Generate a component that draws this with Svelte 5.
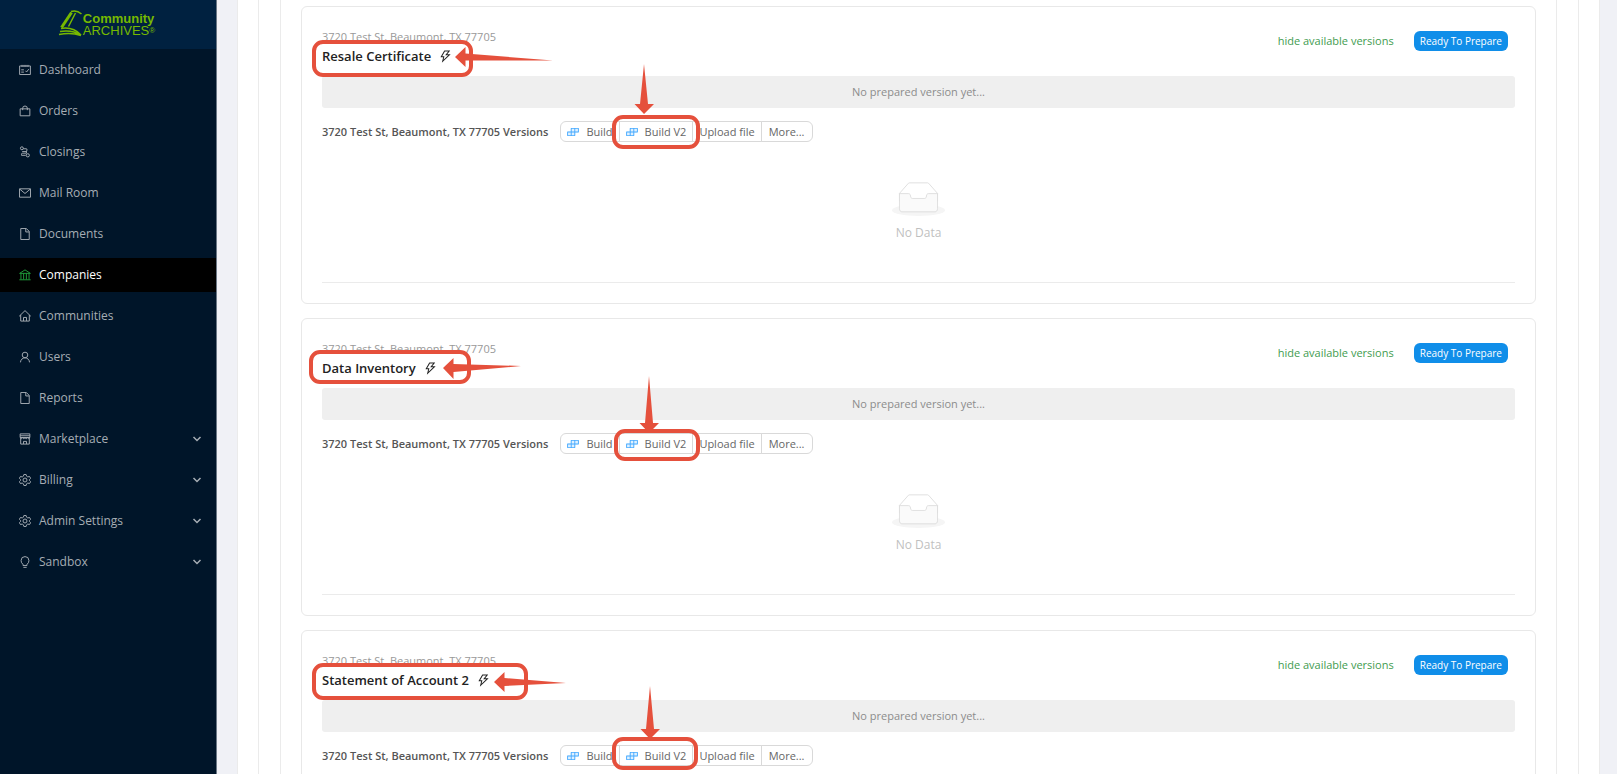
<script lang="ts">
	interface NavItem {
		label: string;
		icon: string;
		active?: boolean;
		children?: boolean;
	}

	interface Box {
		x: number;
		y: number;
		width: number;
		height: number;
	}

	interface Certificate {
		title: string;
		boxes: Box[];
		arrows: string[];
	}

	const address = '3720 Test St, Beaumont, TX 77705';

	const icons: Record<string, string> = {
		schedule:
			'M110 210H914V850H110ZM290 130V290M440 130V290M584 130V290M734 130V290M230 500H430M230 670H430M550 570L630 660L790 450',
		bag: 'M150 350H874V870H150ZM340 450V300A172 160 0 0 1 684 300V450',
		nodes:
			'M390 235A110 110 0 1 1 170 235A110 110 0 1 1 390 235M380 270H600Q680 270 660 360L620 500M300 480H620V600H330Q250 600 250 680V760H560M840 760A120 120 0 1 1 600 760A120 120 0 1 1 840 760',
		mail: 'M100 200H924V824H100ZM130 230L512 550L894 230',
		file: 'M196 100H610L828 320V924H196ZM570 110V358H820',
		bank: 'M110 390H914L512 130ZM210 400V840M410 400V840M614 400V840M814 400V840M90 870H934',
		home: 'M80 530L512 110L944 530M190 440V890H834V440M400 880V620H624V880',
		user: 'M722 362A210 210 0 1 1 302 362A210 210 0 1 1 722 362M174 910C180 720 330 572 512 572S844 720 850 910',
		shop: 'M150 130H874V400H150ZM150 270H874M190 410V890H834V410M150 400Q240 560 330 420Q420 560 512 420Q604 560 694 420Q784 560 874 400M400 880V690H624V880',
		setting:
			'M430 100H594L630 230L720 282L852 248L934 390L838 484V540L934 634L852 776L720 742L630 794L594 924H430L394 794L304 742L172 776L90 634L186 540V484L90 390L172 248L304 282L394 230ZM660 512A148 148 0 1 1 364 512A148 148 0 1 1 660 512',
		bulb: 'M360 770V680Q220 590 220 400A292 292 0 0 1 804 400Q804 590 664 680V770ZM390 910H634'
	};

	const nav: NavItem[] = [
		{ label: 'Dashboard', icon: 'schedule' },
		{ label: 'Orders', icon: 'bag' },
		{ label: 'Closings', icon: 'nodes' },
		{ label: 'Mail Room', icon: 'mail' },
		{ label: 'Documents', icon: 'file' },
		{ label: 'Companies', icon: 'bank', active: true },
		{ label: 'Communities', icon: 'home' },
		{ label: 'Users', icon: 'user' },
		{ label: 'Reports', icon: 'file' },
		{ label: 'Marketplace', icon: 'shop', children: true },
		{ label: 'Billing', icon: 'setting', children: true },
		{ label: 'Admin Settings', icon: 'setting', children: true },
		{ label: 'Sandbox', icon: 'bulb', children: true }
	];

	// callouts are drawn in card coordinates
	const certificates: Certificate[] = [
		{
			title: 'Resale Certificate',
			boxes: [
				{ x: 13, y: 36, width: 157, height: 33 },
				{ x: 313, y: 111, width: 84, height: 30 }
			],
			arrows: [
				'M154 51L164.500 41V47.500L252 54.500L164.500 54.500V61Z',
				'M343 108L333.500 98H339L343 58L347 98H353Z'
			]
		},
		{
			title: 'Data Inventory',
			boxes: [
				{ x: 10, y: 34, width: 158, height: 30 },
				{ x: 315, y: 113, width: 82, height: 28 }
			],
			arrows: [
				'M142 50L152.500 40V46L220 48L152.500 54V61Z',
				'M348 115L338.500 105H344L348 58L352 105H358Z'
			]
		},
		{
			title: 'Statement of Account 2',
			boxes: [
				{ x: 13, y: 35, width: 212, height: 33 },
				{ x: 313, y: 109, width: 82, height: 29 }
			],
			arrows: [
				'M193 52L203.500 42V48L265 53L203.500 56V62Z',
				'M349 109L339.500 99H345L349 56L353 99H359Z'
			]
		}
	];
</script>

{#snippet buildIcon()}
	<svg class="build-icon" viewBox="64 64 896 896" aria-hidden="true">
		<path class="tint" d="M376 210H948V546H680V814H76V478H344V210Z" />
		<path
			d="M916 210H376c-17.700 0-32 14.300-32 32v236H108c-17.700 0-32 14.300-32 32v272c0 17.700 14.300 32 32 32h540c17.700 0 32-14.300 32-32V546h236c17.700 0 32-14.300 32-32V242c0-17.700-14.300-32-32-32zm-504 68h200v200H412V278zm-68 468H144V546h200v200zm268 0H412V546h200v200zm268-268H680V278h200v200z"
		/>
	</svg>
{/snippet}

{#snippet navContent(item: NavItem)}
	<svg class="nav-icon" viewBox="64 64 896 896" aria-hidden="true">
		<path d={icons[item.icon]} />
	</svg>
	<span>{item.label}</span>
{/snippet}

<div class="layout">
	<aside class="sidebar">
		<a class="logo" href="#home">
			<svg class="logo-mark" viewBox="0 0 24 26" aria-hidden="true">
				<path class="spine" d="M2.500 17.500L12.500 2.500" />
				<path d="M12 1.500Q17.500 -0.500 22.500 4M16.500 3L9.500 16.500" />
				<path d="M2 18.500Q14 16.500 22 25M1 21.500Q13 19.500 22 25.300M0 24.500Q12 22 22 25.500" />
			</svg>
			<span class="logo-text">
				<strong>Community</strong>
				<span>ARCHIVES<sup>®</sup></span>
			</span>
		</a>
		<nav>
			{#each nav as item}
				{#if item.children}
					<button type="button" class="nav-item" aria-expanded="false">
						{@render navContent(item)}
						<svg class="chevron" viewBox="0 0 10 10" aria-hidden="true">
							<path d="M1.500 3L5 6.500L8.500 3" />
						</svg>
					</button>
				{:else}
					<a
						class="nav-item {item.active ? 'active' : ''}"
						href="#{item.icon}"
						aria-current={item.active ? 'page' : undefined}
					>
						{@render navContent(item)}
					</a>
				{/if}
			{/each}
		</nav>
	</aside>

	<main>
		<div class="panel">
			<div class="group">
				<div class="list">
					{#each certificates as certificate}
						<article class="card">
							<header>
								<div class="heading">
									<p class="address">{address}</p>
									<h3>
										{certificate.title}
										<svg class="bolt" viewBox="64 64 896 896" aria-hidden="true">
											<path
												d="M848 359.300H627.700L825.800 109c4.100-5.300.4-13-6.300-13H436c-2.800 0-5.500 1.500-6.900 4L170 547.500c-3.100 5.300.7 12 6.900 12h174.400l-89.400 357.600c-1.900 7.800 7.500 13.300 13.300 7.700L853.500 373c5.200-4.900 1.700-13.700-5.500-13.700zM378.200 732.500l60.300-241H281.100l189.600-327.400h224.600L487 427.400h211L378.200 732.500z"
											/>
										</svg>
									</h3>
								</div>
								<div class="status">
									<a href="#versions">hide available versions</a>
									<span class="badge">Ready To Prepare</span>
								</div>
							</header>
							<div class="notice">No prepared version yet...</div>
							<div class="versions">
								<span>{address} Versions</span>
								<div class="button-group">
									<button type="button">{@render buildIcon()}Build</button>
									<button type="button">{@render buildIcon()}Build V2</button>
									<button type="button">Upload file</button>
									<button type="button">More...</button>
								</div>
							</div>
							<div class="empty">
								<svg viewBox="0 0 64 41" aria-hidden="true">
									<ellipse cx="32" cy="34" rx="32" ry="7" />
									<g transform="translate(0 1)">
										<path
											d="M55 12.760L44.854 1.258C44.367.474 43.656 0 42.907 0H21.093c-.749 0-1.460.474-1.947 1.257L9 12.761V22h46v-9.240z"
										/>
										<path
											class="tray"
											d="M41.613 15.931c0-1.605.994-2.930 2.227-2.931H55v18.137C55 33.260 53.680 35 52.050 35h-40.100C10.320 35 9 33.259 9 31.137V13h11.160c1.233 0 2.227 1.323 2.227 2.928v.022c0 1.605 1.005 2.901 2.237 2.901h14.752c1.232 0 2.237-1.308 2.237-2.913v-.007z"
										/>
									</g>
								</svg>
								<p>No Data</p>
							</div>
							<svg class="callouts" aria-hidden="true">
								{#each certificate.arrows as d}
									<path {d} />
								{/each}
								{#each certificate.boxes as box}
									<rect {...box} rx="9" />
								{/each}
							</svg>
						</article>
					{/each}
				</div>
			</div>
		</div>
	</main>
</div>

<style>
	:global(body) {
		margin: 0;
	}

	.layout {
		display: flex;
		height: 100vh;
		background: #f0f1f6;
		color: #333;
		font-family: 'Open Sans', 'Noto Sans', sans-serif;
		font-size: 12px;
		line-height: 18px;
	}

	p,
	h3 {
		margin: 0;
	}

	button {
		font: inherit;
		cursor: pointer;
	}

	a {
		text-decoration: none;
	}

	.sidebar {
		flex: 0 0 216px;
		background: #001529;
		border-right: 1px solid #6b7785;
	}

	.logo {
		display: flex;
		align-items: center;
		justify-content: center;
		height: 49px;
		padding-right: 2px;
		box-sizing: border-box;
		background: #002140;
		color: #76b900;
	}

	.logo-mark {
		width: 24px;
		height: 26px;
		margin-bottom: 4px;
		fill: none;
		stroke: currentColor;
		stroke-width: 1.5;
		overflow: visible;
	}

	.logo-mark .spine {
		stroke-width: 3;
	}

	.logo-text {
		display: flex;
		flex-direction: column;
		font-family: 'Liberation Sans', sans-serif;
		font-size: 13px;
		line-height: 12px;
	}

	.logo-text sup {
		font-size: 8px;
		line-height: 0;
		vertical-align: 2px;
	}

	nav {
		display: flex;
		flex-direction: column;
		gap: 7px;
		padding-top: 4px;
	}

	.nav-item {
		display: flex;
		align-items: center;
		gap: 8px;
		width: 100%;
		height: 34px;
		padding: 0 14px 0 19px;
		box-sizing: border-box;
		border: 0;
		background: none;
		color: #a6adb4;
		text-align: left;
	}

	.nav-item.active {
		background: #000;
		color: #fff;
	}

	.nav-item.active .nav-icon {
		color: #1f9d3a;
	}

	.nav-icon {
		width: 12px;
		height: 12px;
		fill: none;
		stroke: currentColor;
		stroke-width: 72;
	}

	.chevron {
		width: 10px;
		height: 10px;
		margin-left: auto;
		fill: none;
		stroke: currentColor;
		stroke-width: 1.5;
	}

	main {
		flex: 1;
		min-width: 0;
		padding: 0 17px 0 20px;
		font-size: 11px;
		overflow-y: auto;
		scrollbar-width: none;
	}

	.panel,
	.group,
	.list {
		background: #fff;
		border: solid #ebebeb;
		border-width: 0 1px;
	}

	.panel {
		padding: 0 20px;
	}

	.group {
		padding: 0 21px;
	}

	.list {
		display: flex;
		flex-direction: column;
		gap: 14px;
		padding: 6px 20px;
	}

	.card {
		position: relative;
		height: 298px;
		padding: 21px 20px 20px;
		box-sizing: border-box;
		border: 1px solid #e8e8e8;
		border-radius: 6px;
		display: flex;
		flex-direction: column;
	}

	header {
		display: flex;
		justify-content: space-between;
		height: 48px;
	}

	.address {
		color: #999;
	}

	h3 {
		display: flex;
		align-items: center;
		gap: 8px;
		color: #222;
		font-size: 13px;
		font-weight: 600;
		line-height: 20px;
	}

	.bolt {
		width: 13px;
		height: 13px;
		fill: currentColor;
	}

	.status {
		display: flex;
		align-items: center;
		gap: 20px;
		height: 26px;
		padding-right: 7px;
	}

	.status a {
		color: #3f9c50;
	}

	.badge {
		padding: 0 6px;
		border-radius: 6px;
		background: #108ee9;
		color: #fff;
		font-size: 10px;
		line-height: 20px;
	}

	.notice {
		border-radius: 3px;
		background: #efefef;
		color: #8c8c8c;
		line-height: 32px;
		text-align: center;
	}

	.versions {
		display: flex;
		align-items: center;
		gap: 12px;
		margin-top: 13px;
		color: #555;
		font-weight: 600;
	}

	.button-group {
		display: flex;
	}

	.button-group button {
		display: flex;
		align-items: center;
		gap: 7px;
		height: 21px;
		margin-left: -1px;
		padding: 0 6px;
		border: 1px solid #d9d9d9;
		background: #fff;
		color: #666;
		font-weight: 400;
	}

	.button-group button:first-child {
		margin-left: 0;
		border-radius: 6px 0 0 6px;
	}

	.button-group button:last-child {
		padding: 0 7px;
		border-radius: 0 6px 6px 0;
	}

	.build-icon {
		width: 12px;
		height: 12px;
		fill: #45a9ff;
	}

	.build-icon .tint {
		fill: #dff1ff;
	}

	.empty {
		flex: 1;
		display: flex;
		flex-direction: column;
		align-items: center;
		gap: 8px;
		padding-top: 40px;
		border-bottom: 1px solid #ebebeb;
		color: #bfbfbf;
		font-size: 12px;
	}

	.empty svg {
		width: 53px;
		height: 34px;
		fill: none;
		stroke: #d9d9d9;
	}

	.empty ellipse {
		fill: #f5f5f5;
		stroke: none;
	}

	.empty .tray {
		fill: #fafafa;
	}

	.callouts {
		position: absolute;
		top: -1px;
		left: -1px;
		width: 100%;
		height: 100%;
		overflow: visible;
		pointer-events: none;
	}

	.callouts path {
		fill: #e5503c;
	}

	.callouts rect {
		fill: none;
		stroke: #e5503c;
		stroke-width: 4;
	}
</style>
